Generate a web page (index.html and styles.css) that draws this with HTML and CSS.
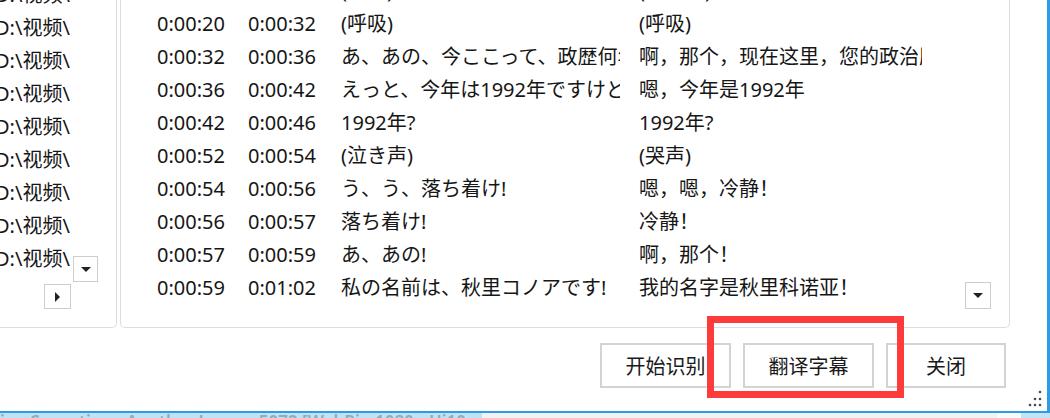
FILE: index.html
```html
<!DOCTYPE html>
<html lang="zh-CN">
<head>
<meta charset="utf-8">
<title>字幕识别</title>
<link rel="stylesheet" href="styles.css">
</head>
<body>
<div class="window">
  <div class="panels">
    <div class="panel panel-left">
      <div class="left-list">
        <div class="lrow"><span class="path">D:\视频\第1集.mp4</span></div>
        <div class="lrow"><span class="path">D:\视频\第2集.mp4</span></div>
        <div class="lrow"><span class="path">D:\视频\第3集.mp4</span></div>
        <div class="lrow"><span class="path">D:\视频\第4集.mp4</span></div>
        <div class="lrow"><span class="path">D:\视频\第5集.mp4</span></div>
        <div class="lrow"><span class="path">D:\视频\第6集.mp4</span></div>
        <div class="lrow"><span class="path">D:\视频\第7集.mp4</span></div>
        <div class="lrow"><span class="path">D:\视频\第8集.mp4</span></div>
        <div class="lrow"><span class="path">D:\视频\第9集.mp4</span></div>
      </div>
      <div class="mini-btn mini-down-left"><span class="tri-down"></span></div>
      <div class="mini-btn mini-right-left"><span class="tri-right"></span></div>
    </div>
    <div class="panel panel-right">
      <div class="sub-list">
        <div class="srow"><span class="c1">0:00:15</span><span class="c2">0:00:20</span><span class="c3">(叹气)</span><span class="c4">(叹气声)</span></div>
        <div class="srow"><span class="c1">0:00:20</span><span class="c2">0:00:32</span><span class="c3">(呼吸)</span><span class="c4">(呼吸)</span></div>
        <div class="srow"><span class="c1">0:00:32</span><span class="c2">0:00:36</span><span class="c3">あ、あの、今ここって、政歴何年ですか?</span><span class="c4">啊，那个，现在这里，您的政治历是几年？</span></div>
        <div class="srow"><span class="c1">0:00:36</span><span class="c2">0:00:42</span><span class="c3">えっと、今年は1992年ですけど</span><span class="c4">嗯，今年是1992年</span></div>
        <div class="srow"><span class="c1">0:00:42</span><span class="c2">0:00:46</span><span class="c3">1992年?</span><span class="c4">1992年?</span></div>
        <div class="srow"><span class="c1">0:00:52</span><span class="c2">0:00:54</span><span class="c3">(泣き声)</span><span class="c4">(哭声)</span></div>
        <div class="srow"><span class="c1">0:00:54</span><span class="c2">0:00:56</span><span class="c3">う、う、落ち着け!</span><span class="c4">嗯，嗯，冷静！</span></div>
        <div class="srow"><span class="c1">0:00:56</span><span class="c2">0:00:57</span><span class="c3">落ち着け!</span><span class="c4">冷静！</span></div>
        <div class="srow"><span class="c1">0:00:57</span><span class="c2">0:00:59</span><span class="c3">あ、あの!</span><span class="c4">啊，那个！</span></div>
        <div class="srow"><span class="c1">0:00:59</span><span class="c2">0:01:02</span><span class="c3">私の名前は、秋里コノアです!</span><span class="c4">我的名字是秋里科诺亚！</span></div>
      </div>
      <div class="mini-btn mini-down-right"><span class="tri-down"></span></div>
    </div>
  </div>
  <div class="actions">
    <button class="btn btn-wide">开始识别</button>
    <button class="btn btn-wide">翻译字幕</button>
    <button class="btn btn-narrow">关闭</button>
  </div>
  <svg class="grip" width="16" height="18" viewBox="0 0 16 18">
    <circle cx="13" cy="2" r="1.3"/>
    <circle cx="8" cy="9" r="1.3"/><circle cx="13" cy="9" r="1.3"/>
    <circle cx="3" cy="15" r="1.3"/><circle cx="8" cy="15" r="1.3"/><circle cx="13" cy="15" r="1.3"/>
  </svg>
  <div class="highlight"></div>
</div>
<div class="taskstrip">
  <div class="task-active"><span class="task-title">ion Sensation - Another Layer - 5072 [WebRip 1080p Hi10p</span></div>
  <div class="task-gap"></div>
  <div class="task-light"></div>
  <div class="task-end"></div>
</div>
</body>
</html>
```
FILE: styles.css
```css
html, body {
  margin: 0;
  padding: 0;
}
body {
  width: 1050px;
  height: 418px;
  overflow: hidden;
  background: #ffffff;
  font-family: "Noto Sans", "Noto Sans CJK SC", sans-serif;
  font-size: 20px;
  color: #161616;
}
.window {
  position: relative;
  box-sizing: border-box;
  width: 1050px;
  height: 413px;
  border-right: 3px solid #2a9de6;
  border-bottom: 2px solid #2a9de6;
  background: #ffffff;
}
.panels {
  display: flex;
  gap: 3px;
  height: 328px;
}
.panel {
  position: relative;
  box-sizing: border-box;
  height: 328px;
  border: 1px solid #d7dee6;
  border-top: none;
  border-radius: 0 0 5px 5px;
  overflow: hidden;
  background: #fff;
}
.panel-left {
  width: 117px;
  border-left: none;
  border-radius: 0 0 5px 0;
}
.panel-right {
  width: 890px;
}
.left-list {
  margin-top: -22px;
}
.lrow {
  height: 33px;
  line-height: 33px;
  white-space: nowrap;
  overflow: hidden;
  width: 70px;
}
.path {
  display: inline-block;
  margin-left: -5px;
}
.sub-list {
  margin-top: -26px;
  padding-left: 36px;
}
.srow {
  display: flex;
  height: 33px;
  line-height: 33px;
  white-space: nowrap;
}
.srow span {
  display: block;
  overflow: hidden;
  white-space: nowrap;
}
.c1 { width: 91px; }
.c2 { width: 93px; }
.c3 { width: 279px; }
.c4 { width: 283px; margin-left: 19px; }

.mini-btn {
  position: absolute;
  box-sizing: border-box;
  border: 1px solid #cdcdcd;
  background: #fff;
  display: flex;
  align-items: center;
  justify-content: center;
}
.mini-down-left { left: 73px; top: 256px; width: 25px; height: 26px; }
.mini-right-left { left: 44px; top: 284px; width: 27px; height: 25px; }
.mini-down-right { left: 844px; top: 282px; width: 26px; height: 27px; }
.tri-down {
  width: 0; height: 0;
  border-left: 5px solid transparent;
  border-right: 5px solid transparent;
  border-top: 5px solid #222;
}
.tri-right {
  width: 0; height: 0;
  border-top: 5px solid transparent;
  border-bottom: 5px solid transparent;
  border-left: 5px solid #222;
}

.actions {
  display: flex;
  justify-content: flex-end;
  gap: 12px;
  margin-top: 15px;
  padding-right: 41px;
}
.btn {
  box-sizing: border-box;
  height: 45px;
  border: 2px solid #d3d3d3;
  background: #ffffff;
  font-family: "Noto Sans CJK SC", sans-serif;
  font-size: 20px;
  color: #1a1a1a;
  padding: 0;
  line-height: 1;
}
.btn-wide { width: 131px; }
.btn-narrow { width: 120px; }

.grip {
  position: absolute;
  right: 4px;
  bottom: 3px;
  fill: #4a4a4a;
}
.highlight {
  position: absolute;
  left: 707px;
  top: 316px;
  width: 197px;
  height: 82px;
  box-sizing: border-box;
  border: 7px solid #fe3b3b;
}

.taskstrip {
  display: flex;
  height: 5px;
  overflow: hidden;
}
.task-active {
  width: 482px;
  background: #bfe2f5;
  overflow: hidden;
  position: relative;
}
.task-title {
  display: block;
  font-family: "Noto Sans", sans-serif;
  font-size: 17px;
  font-weight: 600;
  line-height: 17px;
  margin-top: 0;
  color: #93abb9;
  white-space: nowrap;
}
.task-gap { width: 515px; background: #f2f2f2; }
.task-light { width: 24px; background: #f7f9fb; }
.task-end { flex: 1; background: #c0e3f6; }
```
